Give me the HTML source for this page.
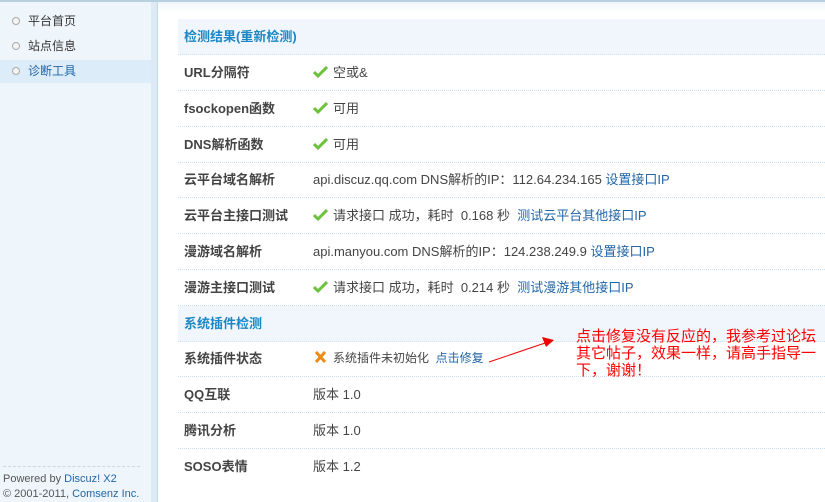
<!DOCTYPE html>
<html><head><meta charset="utf-8"><style>
*{margin:0;padding:0;box-sizing:border-box}
body{width:825px;height:502px;overflow:hidden;background:#fff;font-family:"Liberation Sans","Noto Sans CJK SC",sans-serif;font-size:12px;color:#333;position:relative}
#top{position:absolute;left:0;top:0;width:825px;height:2px;background:#b8d0e0}
#side{position:absolute;left:0;top:2px;width:151px;height:500px;background:#eef6fb}
#strip{position:absolute;left:151px;top:2px;width:6px;height:500px;background:#dde9f5}
#sline{position:absolute;left:157px;top:2px;width:1px;height:500px;background:#c4d8e8}
#grad{position:absolute;left:158px;top:2px;width:667px;height:10px;background:linear-gradient(#eef5fa,#fff)}
.nav{position:absolute;left:0;width:151px;height:23px;line-height:23px;padding-left:28px;font-size:12px;color:#333}
.nav i{position:absolute;left:12px;top:7px;width:8px;height:8px;border:1px solid #aaa;border-radius:50%;background:#f4f4f4}
.nav.on{background:#dcecf8;color:#2366a8}
#foot{position:absolute;left:3px;top:466px;width:137px;border-top:1px dashed #cfd8de;padding-top:5px;font-size:11px;line-height:15px;color:#555}
#foot a{color:#2366a8;text-decoration:none}
.row{position:absolute;left:178px;width:647px;height:36px;border-bottom:1px dotted #cde0ee;line-height:35px;font-size:13px}
.row b{position:absolute;left:6px;font-size:13px;color:#444}
.row span{position:absolute;left:135px;white-space:nowrap;color:#444}
.hd{background:#f0f6fc}
.hd b{color:#1b87c4}
a{color:#2366a8;text-decoration:none}
.ck{display:inline-block;width:15px;height:12px;vertical-align:-1px;margin-right:5px}
</style></head><body>
<div id="top"></div><div id="side"></div><div id="strip"></div><div id="sline"></div><div id="grad"></div>
<div class="nav" style="top:10px"><i></i>平台首页</div>
<div class="nav" style="top:35px"><i></i>站点信息</div>
<div class="nav on" style="top:60px"><i></i>诊断工具</div>
<div id="foot">Powered by <a>Discuz! X2</a><br>© 2001-2011, <a>Comsenz Inc.</a></div>

<div class="row hd" style="top:19px"><b>检测结果(重新检测)</b></div>
<div class="row" style="top:55px"><b>URL分隔符</b><span><svg class="ck" viewBox="0 0 15 12"><path d="M1 6l4 4 9-9" stroke="#6cc23a" stroke-width="3" fill="none"/></svg>空或&amp;</span></div>
<div class="row" style="top:91px"><b>fsockopen函数</b><span><svg class="ck" viewBox="0 0 15 12"><path d="M1 6l4 4 9-9" stroke="#6cc23a" stroke-width="3" fill="none"/></svg>可用</span></div>
<div class="row" style="top:127px"><b>DNS解析函数</b><span><svg class="ck" viewBox="0 0 15 12"><path d="M1 6l4 4 9-9" stroke="#6cc23a" stroke-width="3" fill="none"/></svg>可用</span></div>
<div class="row" style="top:162px"><b>云平台域名解析</b><span>api.discuz.qq.com DNS解析的IP：112.64.234.165 <a>设置接口IP</a></span></div>
<div class="row" style="top:198px"><b>云平台主接口测试</b><span><svg class="ck" viewBox="0 0 15 12"><path d="M1 6l4 4 9-9" stroke="#6cc23a" stroke-width="3" fill="none"/></svg>请求接口 成功，耗时 &nbsp;0.168 秒 &nbsp;<a>测试云平台其他接口IP</a></span></div>
<div class="row" style="top:234px"><b>漫游域名解析</b><span>api.manyou.com DNS解析的IP：124.238.249.9 <a>设置接口IP</a></span></div>
<div class="row" style="top:270px"><b>漫游主接口测试</b><span><svg class="ck" viewBox="0 0 15 12"><path d="M1 6l4 4 9-9" stroke="#6cc23a" stroke-width="3" fill="none"/></svg>请求接口 成功，耗时 &nbsp;0.214 秒 &nbsp;<a>测试漫游其他接口IP</a></span></div>
<div class="row hd" style="top:306px"><b>系统插件检测</b></div>
<div class="row" style="top:341px"><b>系统插件状态</b><span style="font-size:12px"><svg class="ck" viewBox="0 0 15 12"><path d="M3 1l9 10M12 1l-9 10" stroke="#f08a10" stroke-width="3"/></svg>系统插件未初始化 &nbsp;<a>点击修复</a></span></div>
<div class="row" style="top:377px"><b>QQ互联</b><span>版本 1.0</span></div>
<div class="row" style="top:413px"><b>腾讯分析</b><span>版本 1.0</span></div>
<div class="row" style="top:449px;border:none"><b>SOSO表情</b><span>版本 1.2</span></div>

<svg style="position:absolute;left:480px;top:330px" width="90" height="40"><path d="M9 32L68 12" stroke="#e00" stroke-width="1"/><path d="M74 10l-12 -3 4 10z" fill="#e00"/></svg>
<div style="position:absolute;left:576px;top:328px;width:250px;color:#f00;font-size:15px;line-height:17px;font-family:'Liberation Sans','WenQuanYi Zen Hei',sans-serif">点击修复没有反应的，我参考过论坛其它帖子，效果一样，请高手指导一下，谢谢！</div>
</body></html>
